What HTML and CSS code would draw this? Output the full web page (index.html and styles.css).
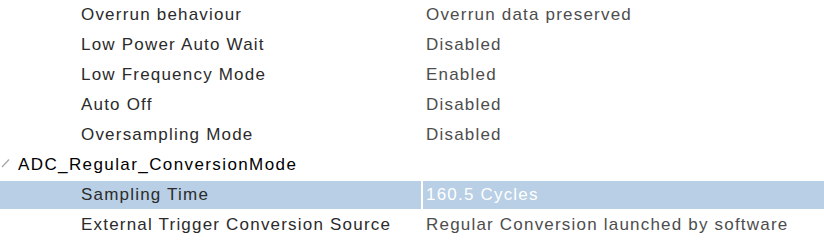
FILE: index.html
```html
<!DOCTYPE html>
<html>
<head>
<meta charset="utf-8">
<link rel="stylesheet" href="styles.css">
</head>
<body>
<div class="tree">
  <div class="row"><div class="name lvl2">Overrun behaviour</div><div class="val">Overrun data preserved</div></div>
  <div class="row"><div class="name lvl2">Low Power Auto Wait</div><div class="val">Disabled</div></div>
  <div class="row"><div class="name lvl2">Low Frequency Mode</div><div class="val">Enabled</div></div>
  <div class="row"><div class="name lvl2">Auto Off</div><div class="val">Disabled</div></div>
  <div class="row"><div class="name lvl2">Oversampling Mode</div><div class="val">Disabled</div></div>
  <div class="row"><div class="name lvl1"><svg class="exp" width="10" height="10" viewBox="0 0 10 10"><path d="M1 9 L8 1.5" stroke="#a8a8a8" stroke-width="1.3" fill="none"/></svg><span class="cat">ADC_Regular_ConversionMode</span></div><div class="val"></div></div>
  <div class="row sel"><div class="name lvl2">Sampling Time</div><div class="val">160.5 Cycles</div></div>
  <div class="row"><div class="name lvl2">External Trigger Conversion Source</div><div class="val">Regular Conversion launched by software</div></div>
</div>
</body>
</html>
```
FILE: styles.css
```css
html, body { margin: 0; padding: 0; background: #fff; }
body { font-family: "Liberation Sans", Arial, sans-serif; font-size: 17px; letter-spacing: 1.2px; width: 824px; height: 244px; overflow: hidden; }
.tree { display: flex; flex-direction: column; }
.row { display: flex; height: 30px; align-items: center; }
.name { width: 421px; height: 28px; display: flex; align-items: center; color: #2b2b2b; box-sizing: border-box; }
.lvl2 { padding-left: 81px; }
.lvl1 { padding-left: 1px; color: #000; }
.exp { margin-right: 7px; margin-top: -4px; }
.cat { letter-spacing: 1.4px; }
.val { flex: 1; margin-left: 2px; height: 28px; display: flex; align-items: center; padding-left: 3px; color: #4d4d4d; }
.sel .name, .sel .val { background: #b8cfe5; }
.sel .val { color: #fff; }
```
